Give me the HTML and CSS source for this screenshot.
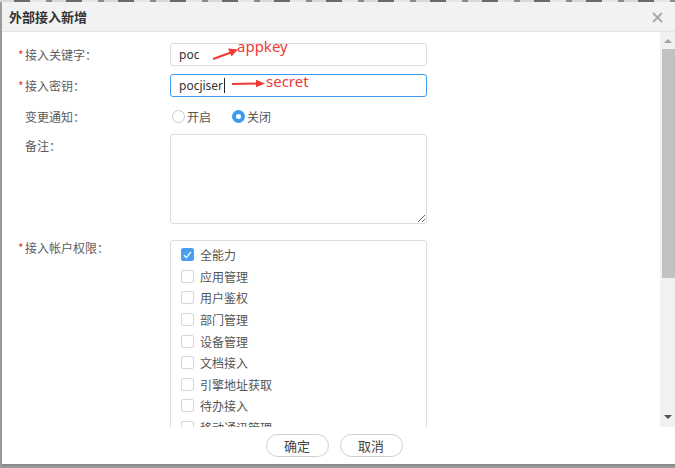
FILE: index.html
```html
<!DOCTYPE html>
<html lang="zh-CN">
<head>
<meta charset="utf-8">
<title>外部接入新增</title>
<link rel="stylesheet" href="styles.css">
</head>
<body>
<div class="page-strip"></div>
<div class="dialog">
  <div class="dlg-head">
    <span class="dlg-title">外部接入新增</span>
    <span class="dlg-close" aria-label="关闭">
      <svg width="11" height="11" viewBox="0 0 11 11"><path d="M1 1L10 10M10 1L1 10" stroke="#a8a8a8" stroke-width="1.8" fill="none"/></svg>
    </span>
  </div>
  <div class="dlg-body">
    <div class="form">
      <div class="row">
        <div class="label"><span class="req">*</span>接入关键字：</div>
        <div class="field"><div class="input">poc</div></div>
      </div>
      <div class="row">
        <div class="label"><span class="req">*</span>接入密钥：</div>
        <div class="field"><div class="input focused">pocjiser<span class="caret"></span></div></div>
      </div>
      <div class="row radio-row">
        <div class="label"><span class="req"></span>变更通知：</div>
        <div class="field radios">
          <label class="radio"><span class="dot"></span>开启</label>
          <label class="radio"><span class="dot on"></span>关闭</label>
        </div>
      </div>
      <div class="row area-row">
        <div class="label"><span class="req"></span>备注：</div>
        <div class="field"><textarea class="area"></textarea></div>
      </div>
      <div class="row">
        <div class="label label-list"><span class="req">*</span>接入帐户权限：</div>
        <div class="field">
          <div class="checklist">
            <div class="item"><span class="box on"><svg width="9" height="8" viewBox="0 0 9 8"><path d="M1 4.2L3.4 6.5L8 1" stroke="#fff" stroke-width="1.2" fill="none"/></svg></span>全能力</div>
            <div class="item"><span class="box"></span>应用管理</div>
            <div class="item"><span class="box"></span>用户鉴权</div>
            <div class="item"><span class="box"></span>部门管理</div>
            <div class="item"><span class="box"></span>设备管理</div>
            <div class="item"><span class="box"></span>文档接入</div>
            <div class="item"><span class="box"></span>引擎地址获取</div>
            <div class="item"><span class="box"></span>待办接入</div>
            <div class="item"><span class="box"></span>移动通讯管理</div>
          </div>
        </div>
      </div>
    </div>
    <div class="scrollbar">
      <span class="arrow-up"></span>
      <div class="thumb"></div>
      <span class="arrow-down"></span>
    </div>
  </div>
  <div class="dlg-foot">
    <button class="btn">确定</button>
    <button class="btn">取消</button>
  </div>

  <svg class="marks" width="673" height="120" viewBox="0 0 673 120">
    <path d="M211 57L229 50.5" stroke="#f03a3a" stroke-width="2" fill="none"/>
    <polygon points="236,47.5 226,46.5 229.5,54.5" fill="#f03a3a"/>
    <path d="M230 82L255 81.6" stroke="#f03a3a" stroke-width="2" fill="none"/>
    <polygon points="263,81.5 254,77.8 254,85.3" fill="#f03a3a"/>
  </svg>
  <span class="note note-appkey">appkey</span>
  <span class="note note-secret">secret</span>
</div>
</body>
</html>
```
FILE: styles.css
```css
html, body {
  margin: 0;
  padding: 0;
}
body {
  width: 675px;
  height: 468px;
  overflow: hidden;
  background: #9a9a9a;
  font-family: "Noto Sans", "Noto Sans CJK SC", sans-serif;
  font-size: 12px;
  color: #555;
}
.page-strip {
  height: 2px;
  background: repeating-linear-gradient(90deg, #d8d8d8 0 14px, #6a6a6a 14px 30px, #e6e6e6 30px 46px, #8a8a8a 46px 52px);
}
.dialog {
  position: relative;
  margin-left: 2px;
  width: 673px;
  height: 464px;
  background: #fff;
  display: flex;
  flex-direction: column;
}
.dlg-head {
  height: 29px;
  border-bottom: 1px solid #e4e4e4;
  background: #f2f2f2;
  display: flex;
  align-items: center;
  justify-content: space-between;
  padding: 0 12px 0 7px;
  flex: none;
}
.dlg-title {
  font-family: "Noto Sans CJK SC", sans-serif;
  font-weight: bold;
  font-size: 13px;
  color: #333;
}
.dlg-close {
  display: flex;
  margin-top: 1px;
}
.dlg-body {
  height: 395px;
  flex: none;
  display: flex;
  overflow: hidden;
}
.form {
  flex: 1;
  overflow: hidden;
  padding: 11px 0 0 16px;
}
.row {
  display: flex;
  margin-bottom: 8px;
}
.label {
  width: 152px;
  flex: none;
  line-height: 23px;
  font-family: "Noto Sans CJK SC", sans-serif;
  color: #5c5c5c;
  display: flex;
}
.req {
  width: 7px;
  color: #e2403e;
  flex: none;
}
.label-list {
  line-height: 16px;
}
.field {
  width: 257px;
}
.input {
  box-sizing: border-box;
  height: 23px;
  border: 1px solid #dcdcdc;
  border-radius: 3px;
  padding: 0 8px;
  line-height: 21px;
  color: #333;
  display: flex;
  align-items: center;
}
.input.focused {
  border-color: #3f9af2;
}
.caret {
  display: inline-block;
  width: 1px;
  height: 15px;
  background: #222;
  margin-left: 1px;
}
.radio-row {
  height: 22px;
  margin-bottom: 7px;
}
.radio-row .label {
  line-height: 23px;
}
.radios {
  display: flex;
  align-items: center;
  padding-left: 2px;
  box-sizing: border-box;
}
.radio {
  display: flex;
  align-items: center;
  font-family: "Noto Sans CJK SC", sans-serif;
  color: #555;
  margin-right: 21px;
}
.dot {
  box-sizing: border-box;
  width: 13px;
  height: 13px;
  border-radius: 50%;
  border: 1px solid #c9c9c9;
  margin-right: 2px;
  background: #fff;
}
.dot.on {
  border: 4px solid #3f9af2;
}
.area-row {
  margin-bottom: 16px;
}
.area {
  display: block;
  box-sizing: border-box;
  width: 257px;
  height: 90px;
  border: 1px solid #dcdcdc;
  border-radius: 3px;
  margin: 0;
  outline: none;
  font: inherit;
}
.checklist {
  border: 1px solid #dcdcdc;
  border-radius: 3px;
  padding: 3px 10px;
}
.item {
  height: 21.6px;
  display: flex;
  align-items: center;
  font-family: "Noto Sans CJK SC", sans-serif;
  color: #555;
}
.box {
  box-sizing: border-box;
  width: 13px;
  height: 13px;
  border: 1px solid #d6d6d6;
  border-radius: 2px;
  margin-right: 6px;
  display: flex;
  align-items: center;
  justify-content: center;
}
.box.on {
  background: #4a9ff2;
  border-color: #4a9ff2;
}
.scrollbar {
  width: 15px;
  flex: none;
  background: #f1f1f1;
  display: flex;
  flex-direction: column;
  align-items: flex-end;
  position: relative;
}
.arrow-up {
  width: 0;
  height: 0;
  border-left: 4px solid transparent;
  border-right: 4px solid transparent;
  border-bottom: 4px solid #a3a3a3;
  margin: 7px 3px 6px 0;
}
.thumb {
  width: 13px;
  height: 229px;
  background: #c1c1c1;
}
.arrow-down {
  width: 0;
  height: 0;
  border-left: 4px solid transparent;
  border-right: 4px solid transparent;
  border-top: 4px solid #505050;
  margin: auto 3px 8px 0;
}
.dlg-foot {
  flex: 1;
  display: flex;
  justify-content: center;
  align-items: flex-start;
  gap: 11px;
  padding: 7px 9px 0 0;
  border-bottom: 2px solid #8a8a8a;
}
.btn {
  width: 63px;
  height: 23px;
  border: 1px solid #cfcfcf;
  border-radius: 12px;
  background: #fff;
  font-family: "Noto Sans CJK SC", sans-serif;
  font-size: 13px;
  color: #444;
  padding: 0;
  line-height: 21px;
}
.marks {
  position: absolute;
  left: 0;
  top: 0;
  pointer-events: none;
}
.note {
  position: absolute;
  font-family: "Noto Sans", sans-serif;
  font-size: 15px;
  line-height: 15px;
  color: #f03a3a;
}
.note-appkey {
  left: 235px;
  top: 37px;
}
.note-secret {
  left: 264px;
  top: 72px;
}
```
